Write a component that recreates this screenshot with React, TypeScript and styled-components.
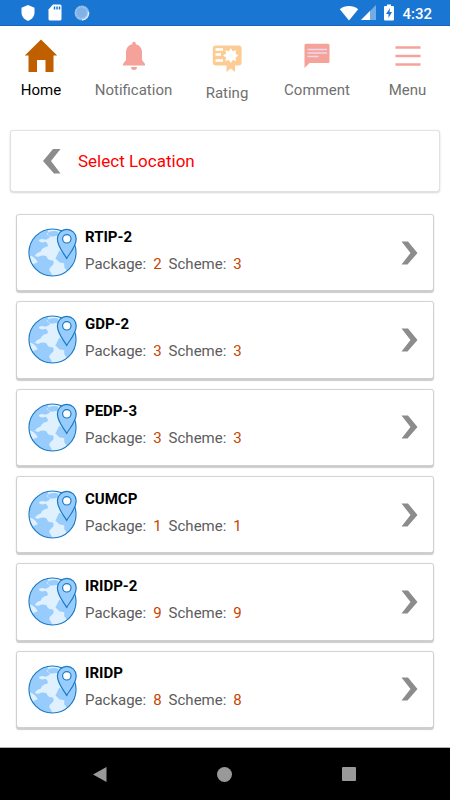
import React from "react";
import styled, { createGlobalStyle } from "styled-components";

const GlobalStyle = createGlobalStyle`
  * { box-sizing: border-box; }
  body { margin: 0; background: #fff; font-family: Roboto, "Noto Sans", sans-serif; }
  button { font: inherit; color: inherit; background: none; border: 0; padding: 0; cursor: pointer; }
  svg { display: block; flex: none; }
`;

const Screen = styled.div`
  display: flex;
  flex-direction: column;
  min-height: 100vh;
`;

const StatusBar = styled.header`
  display: flex;
  align-items: center;
  justify-content: space-between;
  height: 26px;
  padding: 0 18px 0 20px;
  background: #1976d2;
  border-bottom: 1px solid #1565c0;
  color: #fff;
`;

const StatusGroup = styled.div<{ $gap: number }>`
  display: flex;
  align-items: center;
  gap: ${(p) => p.$gap}px;
`;

const Clock = styled.time`
  font-size: 15px;
  line-height: 20px;
  font-weight: 500;
  padding-top: 2px;
`;

const Tabs = styled.nav`
  display: grid;
  grid-template-columns: 82fr 103fr 84fr 96fr 85fr;
  align-items: start;
  padding-top: 12px;
`;

const Tab = styled.button<{ $active?: boolean; $low?: boolean }>`
  display: flex;
  flex-direction: column;
  align-items: center;
  gap: ${(p) => (p.$low ? 7 : 4)}px;
  font-size: 15px;
  line-height: 20px;
  color: ${(p) => (p.$active ? "#000" : "#707070")};
`;

const LocationBar = styled.section`
  display: flex;
  align-items: center;
  gap: 17px;
  height: 60px;
  margin: 28px 11px 0;
  padding-left: 32px;
  border-radius: 2px;
  box-shadow: 0 0 1px 1px #e2e2e2, 0 1px 2px 1px #d8d8d8;
`;

const Title = styled.h1`
  margin: 0;
  font-size: 17px;
  line-height: 24px;
  font-weight: 400;
  color: #f00;
`;

const List = styled.main`
  display: grid;
  flex: 1;
  grid-auto-rows: 1fr;
  gap: 12px;
  padding: 24px 17px 20px;
  border-bottom: 1px solid #b0b0b0;
`;

const Card = styled.button`
  display: flex;
  align-items: center;
  gap: 8px;
  padding: 0 15px 0 11px;
  min-height: 70px;
  text-align: left;
  border-radius: 2px;
  background: #fff;
  box-shadow: 0 0 1px 1px #d0d0d0, 0 2px 1px 1px #cdcdcd;
`;

const Details = styled.span`
  display: flex;
  flex: 1;
  flex-direction: column;
  gap: 7px;
  padding-bottom: 5px;
`;

const Name = styled.span`
  font-size: 15px;
  line-height: 20px;
  font-weight: 700;
  color: #000;
`;

const Counts = styled.span`
  display: flex;
  gap: 7px;
  font-size: 15px;
  line-height: 20px;
  color: #5c5c5c;
`;

const Count = styled.span`
  color: #c84400;
`;

const SystemBar = styled.footer`
  display: flex;
  align-items: center;
  justify-content: center;
  gap: 110px;
  height: 52px;
  padding-right: 2px;
  background: #000;
  color: #999;
`;

const ShieldIcon = () => (
  <svg width="16" height="18" viewBox="0 0 16 18" fill="#fff">
    <path d="M8 1 14.5 3.7V8.6C14.5 12.6 11.8 15.7 8 17 4.2 15.7 1.5 12.6 1.5 8.6V3.7Z" />
  </svg>
);

const SdCardIcon = () => (
  <svg width="14" height="17" viewBox="0 0 14 17">
    <path d="M5 .5H12Q13.500.5 13.500 2V15Q13.500 16.500 12 16.500H2Q.5 16.500.5 15V5.500Z" fill="#fff" />
    <path d="M6.500 2.500V5.500M9 2.500V5.500M11.500 2.500V5.500" stroke="#1976d2" strokeWidth="1.500" />
  </svg>
);

const SyncIcon = () => (
  <svg width="16" height="16" viewBox="0 0 16 16" fill="none">
    <circle cx="8" cy="8" r="7.500" fill="#7fb2e6" />
    <circle cx="7.500" cy="7.500" r="5.800" stroke="#a9cbef" strokeWidth="1.600" strokeDasharray="1 1" />
    <path d="M14.500 7A7 7 0 0 1 8 14.800" stroke="#e8f2fc" strokeWidth="1.200" />
  </svg>
);

const WifiIcon = () => (
  <svg width="20" height="16" viewBox="0 0 20 16" fill="#fff">
    <path d="M.8 4.200C6-.2 14-.2 19.200 4.200L10 15.500Z" />
  </svg>
);

const SignalIcon = () => (
  <svg width="15" height="15" viewBox="0 0 15 15">
    <path d="M15 0V15H0Z" fill="#72ace4" />
    <path d="M9 6V15H0Z" fill="#fff" />
  </svg>
);

const BatteryIcon = () => (
  <svg width="10" height="17" viewBox="0 0 10 17">
    <path d="M3 .5H7V2H9Q10 2 10 3V15.500Q10 16.500 9 16.500H1Q0 16.500 0 15.500V3Q0 2 1 2H3Z" fill="#fff" />
    <path d="M6 4 2 10H4.500V14L8 8H5.500Z" fill="#1976d2" />
  </svg>
);

const HomeIcon = () => (
  <svg width="34" height="38" viewBox="0 0 34 38">
    <path d="M17 1.500.8 17.500H4.500V34H13V22H21.500V34H29.500V17.500H33.200Z" fill="#bf5f00" />
  </svg>
);

const BellIcon = () => (
  <svg width="24" height="38" viewBox="0 0 24 38" fill="#f5a29b">
    <path d="M10.200 6.200V5.500A1.800 1.800 0 0 1 13.800 5.500V6.200C18 7 20 10.500 20 14.500V22L23 26V27.500H1V26L4 22V14.500C4 10.500 6 7 10.200 6.200Z" />
    <path d="M9 29H15A3 3 0 0 1 9 29Z" />
  </svg>
);

const RatingIcon = () => (
  <svg width="30" height="38" viewBox="0 0 30 38">
    <rect x=".8" y="7.500" width="28.800" height="20" rx="3" fill="#fccc94" />
    <path d="M14.500 22H23V34L18.800 30.500 14.500 34Z" fill="#fccc94" />
    <path d="M3.500 11.500H11M3.500 16.500H9M3.500 22.500H11" stroke="#fff" strokeWidth="2.600" />
    <path d="M18.800 10.200 20.700 13.200 24.200 12.200 23.500 15.600 26.400 17.600 23.500 19.600 24.200 23 20.700 22 18.800 25 16.900 22 13.400 23 14.100 19.600 11.200 17.600 14.100 15.600 13.400 12.200 16.900 13.200Z" fill="#fff" />
  </svg>
);

const CommentIcon = () => (
  <svg width="26" height="38" viewBox="0 0 26 38">
    <path d="M2 5.800H24Q25.500 5.800 25.500 7.300V23.500Q25.500 25 24 25H5.500L.5 30V7.300Q.5 5.800 2 5.800Z" fill="#f5a29b" />
    <path d="M3.500 11.500H23M3.500 15H23M3.500 18.500H14.500" stroke="#eed9ec" strokeWidth="1.500" />
  </svg>
);

const MenuIcon = () => (
  <svg width="26" height="38" viewBox="0 0 26 38">
    <path d="M.5 9.500H25.500M.5 18H25.500M.5 26.500H25.500" stroke="#f5a29b" strokeWidth="2.600" />
  </svg>
);

const BackIcon = () => (
  <svg width="18" height="26" viewBox="0 0 18 26">
    <path d="M10 1H17.500L8 13 17.500 25.500H11L0 13Z" fill="#8c8c8c" />
  </svg>
);

const ForwardIcon = () => (
  <svg width="17" height="24" viewBox="0 0 17 24">
    <path d="M.5.5H7L16.500 12 6.500 23.500H.5L9.500 12Z" fill="#8c8c8c" />
  </svg>
);

const GlobeIcon = () => (
  <svg width="49" height="49" viewBox="0 0 50 50">
    <circle cx="25" cy="25" r="24" fill="#dff0fe" />
    <g fill="#98ccfd">
      <path d="M2 19C5 10 11 4 20 2Q22 4 19 6Q20 8 23 8Q22 11 18 12Q12 10 11 13Q13 16 18 14Q21 16 20 19Q14 20 13 24Q9 25 7 28Q9 30 11 29Q11 32 8 32Q6 29 2 28Z" />
      <path d="M8 32Q13 26 19 29Q20 33 25 33Q28 36 24 39Q20 42 23 45L25 49C17 49 8 44 5 37L10 35Z" />
      <path d="M21 4Q28 2 31 4L30 8 24 9 20 7ZM32 23 41 30 47 18Q50 29 45 37L40 44 37 40V36L32 35 28 31 30 27Z" />
    </g>
    <circle cx="25" cy="25" r="24" fill="none" stroke="#1879c5" strokeWidth="1.200" />
    <path d="M39.500 31C36 25 30 19 30 11A9.600 9.600 0 0 1 49.200 11C49.200 19 43 25 39.500 31Z" fill="#98ccfd" stroke="#1879c5" strokeWidth="1.200" />
    <circle cx="39.600" cy="11" r="4.300" fill="#fff" stroke="#1879c5" strokeWidth="1.200" />
  </svg>
);

const projects = [
  { name: "RTIP-2", packages: 2, schemes: 3 },
  { name: "GDP-2", packages: 3, schemes: 3 },
  { name: "PEDP-3", packages: 3, schemes: 3 },
  { name: "CUMCP", packages: 1, schemes: 1 },
  { name: "IRIDP-2", packages: 9, schemes: 9 },
  { name: "IRIDP", packages: 8, schemes: 8 },
];

export default function App() {
  return (
    <Screen>
      <GlobalStyle />
      <StatusBar>
        <StatusGroup $gap={12}>
          <ShieldIcon />
          <SdCardIcon />
          <SyncIcon />
        </StatusGroup>
        <StatusGroup $gap={8}>
          <StatusGroup $gap={2}>
            <WifiIcon />
            <SignalIcon />
          </StatusGroup>
          <BatteryIcon />
          <Clock>4:32</Clock>
        </StatusGroup>
      </StatusBar>

      <Tabs>
        <Tab $active aria-current="page"><HomeIcon />Home</Tab>
        <Tab><BellIcon />Notification</Tab>
        <Tab $low><RatingIcon />Rating</Tab>
        <Tab><CommentIcon />Comment</Tab>
        <Tab><MenuIcon />Menu</Tab>
      </Tabs>

      <LocationBar>
        <button aria-label="Back"><BackIcon /></button>
        <Title>Select Location</Title>
      </LocationBar>

      <List>
        {projects.map((p) => (
          <Card key={p.name}>
            <GlobeIcon />
            <Details>
              <Name>{p.name}</Name>
              <Counts>
                <span>Package:</span>
                <Count>{p.packages}</Count>
                <span>Scheme:</span>
                <Count>{p.schemes}</Count>
              </Counts>
            </Details>
            <ForwardIcon />
          </Card>
        ))}
      </List>

      <SystemBar>
        <button aria-label="Back">
          <svg width="14" height="15" viewBox="0 0 14 15"><path d="M0 7.500 13.500 0V15Z" fill="currentColor" /></svg>
        </button>
        <button aria-label="Home">
          <svg width="15" height="15" viewBox="0 0 15 15"><circle cx="7.500" cy="7.500" r="7.500" fill="currentColor" /></svg>
        </button>
        <button aria-label="Recent apps">
          <svg width="14" height="14" viewBox="0 0 14 14"><rect width="14" height="14" rx="1" fill="currentColor" /></svg>
        </button>
      </SystemBar>
    </Screen>
  );
}
